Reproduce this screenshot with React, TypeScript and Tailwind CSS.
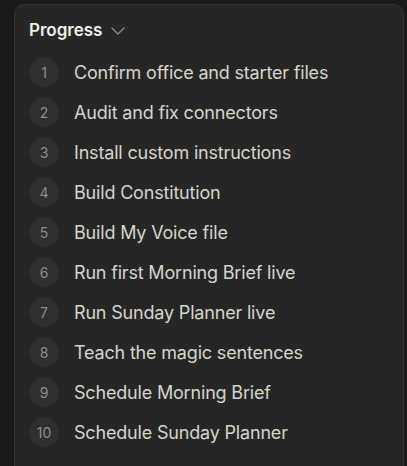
import { ChevronDown } from "lucide-react";

const steps = [
  "Confirm office and starter files",
  "Audit and fix connectors",
  "Install custom instructions",
  "Build Constitution",
  "Build My Voice file",
  "Run first Morning Brief live",
  "Run Sunday Planner live",
  "Teach the magic sentences",
  "Schedule Morning Brief",
  "Schedule Sunday Planner",
];

export default function App() {
  return (
    <div
      className="h-screen overflow-hidden bg-[#1a1a1a] pt-[4px] pl-[14px] pr-[3px]"
      style={{ fontFamily: "Inter, 'Noto Sans', sans-serif" }}
    >
      <div className="h-[500px] rounded-[10px] border border-[#323232] bg-[#262626] px-[14px] pt-[15px]">
        <div className="flex h-[22px] items-center gap-[4px]">
          <span className="text-[17px] font-semibold text-[#f0efe9]">Progress</span>
          <ChevronDown size={24} strokeWidth={1.4} className="text-[#8c8c8c]" />
        </div>
        <ol className="mt-[15px] flex flex-col gap-[10px]">
          {steps.map((s, i) => (
            <li key={s} className="flex h-[30px] items-center gap-[15px]">
              <span className="flex h-[30px] w-[30px] shrink-0 items-center justify-center rounded-full bg-[#2f2f2f] pt-[1px] text-[14px] text-[#8e8e8a]">
                {i + 1}
              </span>
              <span className="text-[18px] tracking-[-0.01em] text-[#d7d5cb]">{s}</span>
            </li>
          ))}
        </ol>
      </div>
    </div>
  );
}
